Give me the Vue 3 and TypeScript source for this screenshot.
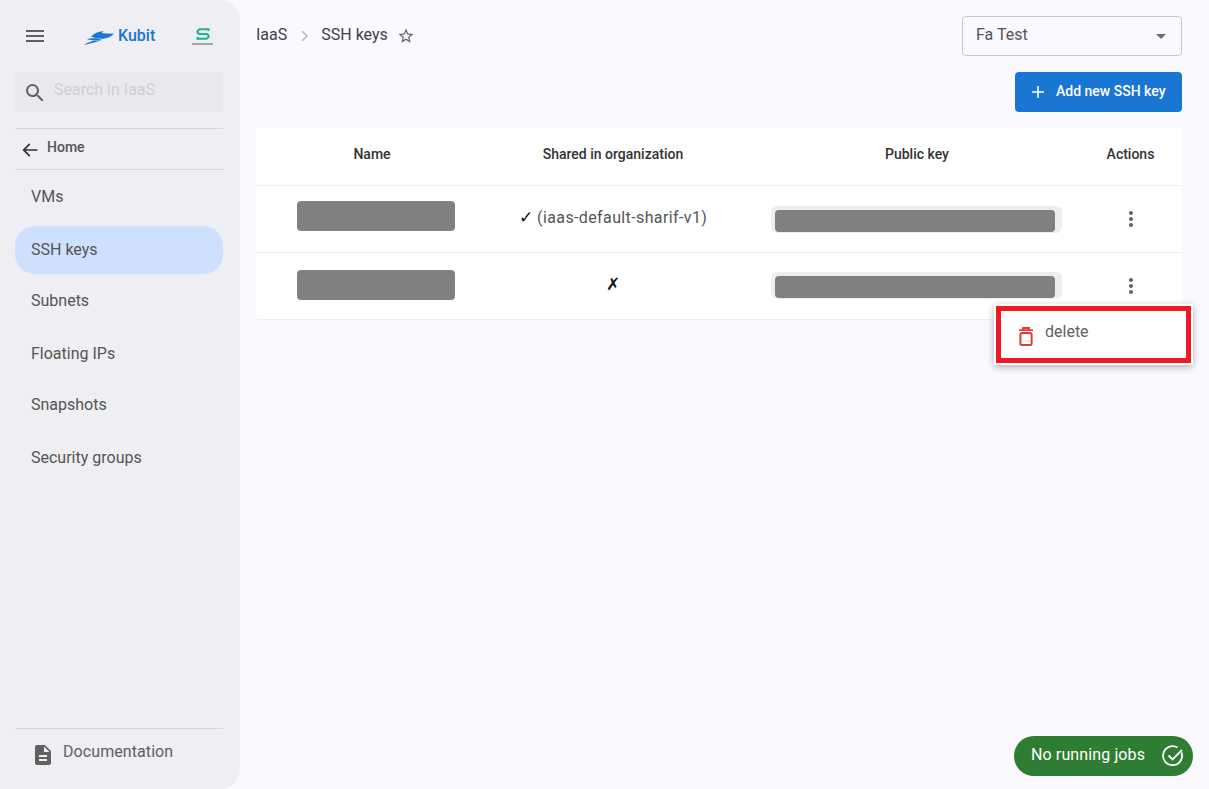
<template>
  <div class="page">
    <aside class="sidebar">
      <div class="brand">
        <svg class="burger" width="18" height="12" viewBox="0 0 18 12"><path d="M0 1h18M0 6h18M0 11h18" stroke="#5f5f5f" stroke-width="1.8" /></svg>
        <div class="kubit">
          <svg width="30" height="14" viewBox="0 0 30 14">
            <path d="M7 5.500 C10 2.500 14 .5 19.500 0 L17.500 2.300 L30 2.800 C27 6 23.500 7.300 19 7.700 C14 7.700 10.500 7 7 5.500Z" fill="#1976d2" />
            <path d="M3 8.300 C8 6.300 12 7.300 18.500 8.300 C12 9.800 7.500 9.800 3 8.300Z" fill="#1976d2" />
            <path d="M0 14 C4.500 10.500 11 9.300 17.500 9.300 C11 11.300 5 13 0 14Z" fill="#1976d2" />
          </svg>
          <span>Kubit</span>
        </div>
        <div class="partner">
          <svg width="14" height="12" viewBox="0 0 14 12" fill="none"><path d="M12.500 3V1.200H3.500L1.500 3V4.500L3 6H11L12.500 7.500V9L10.500 10.800H1.500V9" stroke="#1fb394" stroke-width="2.100" /></svg>
          <i></i>
        </div>
      </div>

      <label class="search">
        <svg width="24" height="24" viewBox="0 0 24 24"><path fill="#616161" d="M15.500 14h-.79l-.28-.27A6.470 6.470 0 0 0 16 9.500 6.500 6.500 0 1 0 9.500 16c1.610 0 3.090-.59 4.230-1.570l.27.28v.79l5 4.990L20.490 19l-4.990-5zm-6 0C7.010 14 5 11.990 5 9.500S7.010 5 9.500 5 14 7.010 14 9.500 11.990 14 9.500 14z" /></svg>
        <input placeholder="Search in IaaS" />
      </label>

      <div class="home">
        <svg width="20" height="20" viewBox="0 0 24 24"><path fill="#333" d="M21 11H6.830l5.590-5.590L11 4l-8 8 8 8 1.410-1.410L6.830 13H21z" /></svg>
        <span>Home</span>
      </div>

      <nav class="nav">
        <a v-for="item in navItems" :key="item" :class="['nav-item', { active: item === 'SSH keys' }]">{{ item }}</a>
      </nav>

      <div class="docs">
        <svg width="24" height="24" viewBox="0 0 24 24"><path fill="#616161" d="M14 2H6c-1.100 0-2 .9-2 2v16c0 1.100.9 2 2 2h12c1.100 0 2-.9 2-2V8l-6-6zm2 16H8v-2h8v2zm0-4H8v-2h8v2zm-3-5V3.500L18.500 9H13z" /></svg>
        <span>Documentation</span>
      </div>
    </aside>

    <main class="main">
      <header class="topbar">
        <div class="crumbs">
          <span>IaaS</span>
          <svg class="chev" width="10" height="12" viewBox="0 0 10 12" fill="none"><path d="M2 1l5 5-5 5" stroke="#bdbdbd" stroke-width="1.600" /></svg>
          <span>SSH keys</span>
          <svg class="star" width="18" height="18" viewBox="0 0 24 24"><path fill="#616161" d="M22 9.240l-7.190-.62L12 2 9.190 8.630 2 9.240l5.460 4.730L5.820 21 12 17.270 18.180 21l-1.630-7.030L22 9.240zM12 15.400l-3.760 2.270 1-4.280-3.320-2.880 4.380-.38L12 6.100l1.710 4.040 4.380.38-3.320 2.880 1 4.280L12 15.400z" /></svg>
        </div>
        <div class="select">
          <span>Fa Test</span>
          <i class="caret"></i>
        </div>
      </header>

      <div class="toolbar">
        <button class="add">
          <svg width="14" height="14" viewBox="0 0 14 14"><path d="M7 1v12M1 7h12" stroke="#fff" stroke-width="1.500" /></svg>
          <span>Add new SSH key</span>
        </button>
      </div>

      <section class="table">
        <div class="row head">
          <div>Name</div>
          <div>Shared in organization</div>
          <div>Public key</div>
          <div class="act">Actions</div>
        </div>
        <div v-for="(row, i) in rows" :key="i" :class="['row', { first: i === 0 }]">
          <div><span class="mask-name"></span></div>
          <div class="shared"><span class="mark">{{ row.mark }}</span> {{ row.org }}</div>
          <div><span class="key-pill"><span class="mask-key"></span></span></div>
          <div class="act">
            <svg width="24" height="24" viewBox="0 0 24 24"><path fill="#616161" d="M12 8c1.100 0 2-.9 2-2s-.9-2-2-2-2 .9-2 2 .9 2 2 2zm0 2c-1.100 0-2 .9-2 2s.9 2 2 2 2-.9 2-2-.9-2-2-2zm0 6c-1.100 0-2 .9-2 2s.9 2 2 2 2-.9 2-2-.9-2-2-2z" /></svg>
          </div>
        </div>

        <div class="menu">
          <svg width="16" height="19" viewBox="0 0 16 19" fill="none"><path d="M1 3.200h14M5 3V1h6v2" stroke="#e53935" stroke-width="1.800" /><rect x="2.400" y="6" width="11.200" height="12" rx="1.500" stroke="#e53935" stroke-width="2" /></svg>
          <span>delete</span>
        </div>
      </section>

      <div class="jobs">
        <span>No running jobs</span>
        <svg width="24" height="24" viewBox="0 0 24 24" fill="none"><path d="M20.500 8.500A9.500 9.500 0 1 1 16.500 3.600" stroke="#fff" stroke-width="1.800" /><path d="M7.500 11.500l4 4L21 6" stroke="#fff" stroke-width="1.800" /></svg>
      </div>
    </main>
  </div>
</template>

<script setup lang="ts">
const navItems: string[] = ['VMs', 'SSH keys', 'Subnets', 'Floating IPs', 'Snapshots', 'Security groups']

const rows: { mark: string; org: string }[] = [
  { mark: '✓', org: '(iaas-default-sharif-v1)' },
  { mark: '✗', org: '' },
]
</script>

<style>
html, body { margin: 0; background: #f9f9ff; }
</style>

<style scoped>
.page { display: flex; width: 1209px; height: 789px; overflow: hidden; background: #f9f9ff; font-family: Roboto, "Noto Sans", sans-serif; color: #424242; }

.sidebar { width: 240px; flex: none; box-sizing: border-box; padding: 0 17px 0 15px; display: flex; flex-direction: column; background: #eeeef3; border-radius: 0 20px 20px 0; }
.brand { height: 72px; display: flex; align-items: center; position: relative; }
.burger { margin: 0 0 0 11px; }
.kubit { display: flex; align-items: center; gap: 4px; margin-left: 40px; color: #1976d2; font-size: 16px; font-weight: 500; }
.kubit svg { margin-top: 4px; }
.kubit span { margin-top: -2px; }
.partner { display: flex; flex-direction: column; align-items: center; gap: 3px; margin-left: 37px; margin-top: 0; }
.partner i { display: block; width: 21px; height: 2px; background: #a3a3a6; }

.search { height: 40px; display: flex; align-items: center; gap: 7px; padding-left: 8px; background: #e9e9ed; border-radius: 4px; }
.search svg { margin-top: 1px; }
.search input { flex: 1; min-width: 0; border: 0; outline: 0; padding: 0; background: transparent; font: 16px Roboto, sans-serif; margin-top: -5px; }
.search input::placeholder { color: #cfcfd2; opacity: 1; }

.home { margin-top: 16px; height: 42px; box-sizing: border-box; display: flex; align-items: center; gap: 7px; padding-left: 5px; border-top: 1px solid #d9d9dd; border-bottom: 1px solid #d9d9dd; font-size: 14px; font-weight: 500; color: #555; }
.home svg { margin-top: 1px; }
.home span { margin-top: -4px; }

.nav { display: flex; flex-direction: column; }
.nav-item { height: 52.25px; box-sizing: border-box; display: flex; align-items: center; padding-left: 16px; font-size: 16px; color: #555; }
.nav-item.active { height: 48px; margin: 4px 0 0.25px; padding-bottom: 2px; background: #cfe0ff; border-radius: 20px; }
.nav-item:nth-child(4) { padding-top: 2px; }
.nav-item:nth-child(5) { padding-bottom: 2px; }

.docs { margin-top: auto; height: 61px; box-sizing: border-box; display: flex; align-items: center; gap: 8px; padding: 0 0 15px 16px; border-top: 1px solid #d9d9dd; font-size: 16px; letter-spacing: .08px; color: #616161; }
.docs svg { margin-top: 6px; }

.main { flex: 1; min-width: 0; position: relative; box-sizing: border-box; padding: 16px 27px 0 16px; }
.topbar { height: 40px; display: flex; align-items: center; justify-content: space-between; }
.crumbs { display: flex; align-items: center; font-size: 16px; color: #424242; margin-top: -3px; }
.chev { margin: 3px 11px 0 13px; }
.star { margin: 3px 0 0 9px; }
.select { width: 220px; height: 40px; box-sizing: border-box; display: flex; align-items: center; justify-content: space-between; padding: 0 15px 0 13px; border: 1px solid #c6c6cc; border-radius: 4px; font-size: 16px; color: #555; }
.select span { margin-top: -3px; }
.caret { width: 0; height: 0; border: 5px solid transparent; border-top-color: #6f6f6f; border-bottom: 0; margin-top: 1px; }

.toolbar { display: flex; justify-content: flex-end; margin-top: 16px; }
.add { width: 167px; height: 40px; display: flex; align-items: center; gap: 11px; padding: 0 0 0 16px; border: 0; border-radius: 4px; background: #1976d2; color: #fff; font: 500 14px Roboto, sans-serif; }
.add span { margin-top: -3px; }

.table { position: relative; margin-top: 16px; background: #fff; border-radius: 4px; border-bottom: 1px solid #eeeef2; }
.row { display: grid; grid-template-columns: 232px 250px 358px 86px; height: 67px; border-top: 1px solid #eeeef2; box-sizing: border-box; align-items: center; justify-items: center; font-size: 16px; color: #555; }
.row.head { height: 57px; border-top: 0; font-size: 14px; font-weight: 500; color: #333; padding-bottom: 5px; }
.act { padding-right: 17px; display: flex; }
.shared { margin-top: -5px; letter-spacing: .38px; }
.mark { color: #111; letter-spacing: 0; font-size: 17px; }
.mask-name { display: block; width: 158px; height: 30px; margin: 0 0 2px 7px; background: #808080; border-radius: 4px; }
.row.first .mask-name { margin-bottom: 6px; }
.key-pill { display: block; width: 291px; height: 27px; box-sizing: border-box; padding: 4px 7px 1px 4px; margin: 0 0 1px -2px; background: #eeeef2; border-radius: 6px; }
.row.first .key-pill { margin-bottom: 0; }
.mask-key { display: block; height: 22px; background: #808080; border-radius: 4px; }

.menu { position: absolute; left: 740px; top: 178px; width: 195px; height: 57px; box-sizing: border-box; display: flex; align-items: center; gap: 11px; padding: 0 0 6px 17px; background: #fff; border: 5px solid #ec1c24; box-shadow: 0 0 0 2px #fff, 0 2px 7px 2px rgba(0, 0, 0, .3); font-size: 16px; color: #616161; }
.menu span { margin-top: 0; }
.menu svg { margin-top: 9px; }

.jobs { position: absolute; right: 16px; bottom: 13px; width: 179px; height: 40px; box-sizing: border-box; display: flex; align-items: center; justify-content: space-between; padding: 0 8px 0 17px; background: #2e7d32; border-radius: 20px; color: #fff; font-size: 16px; letter-spacing: .12px; }
.jobs span { margin-top: -3px; }
</style>
